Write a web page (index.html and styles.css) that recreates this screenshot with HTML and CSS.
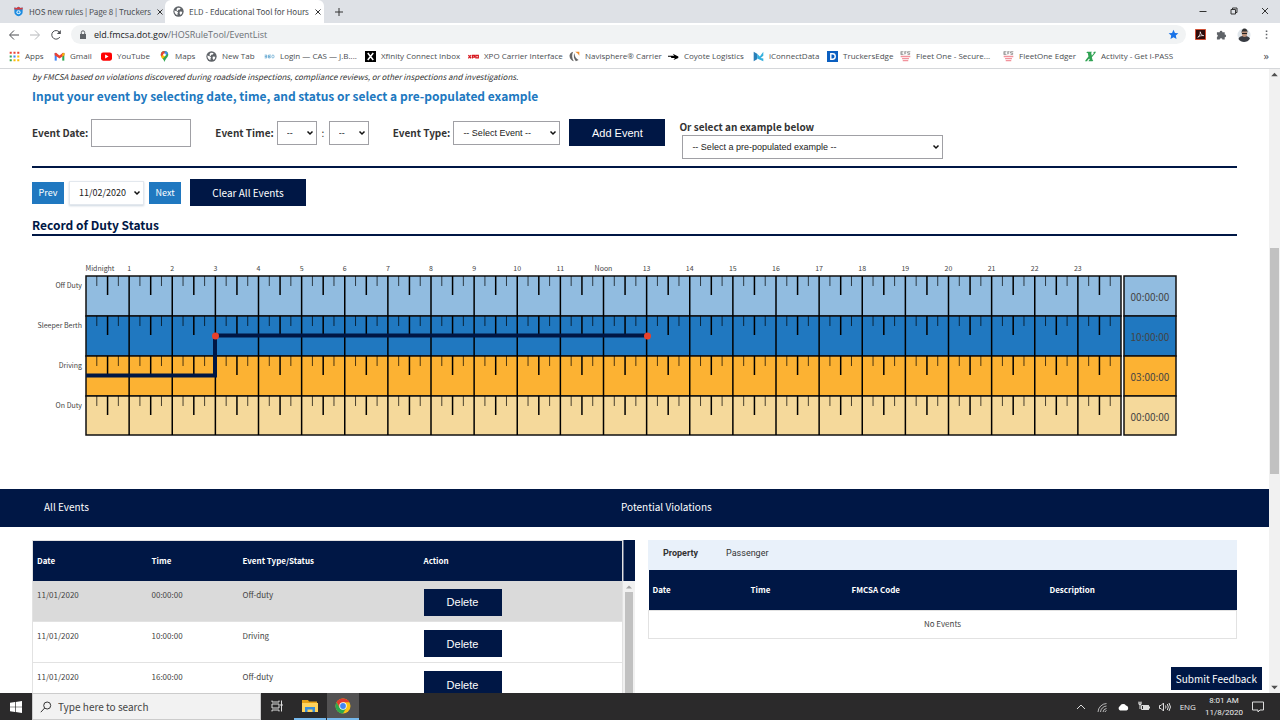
FILE: index.html
```html
<!DOCTYPE html>
<html lang="en">
  <head>
    <meta charset="UTF-8" />
    <meta name="viewport" content="width=device-width, initial-scale=1.0" />
    <title>ELD - Educational Tool for Hours of Service</title>
    <link rel="stylesheet" href="styles.css">
  </head>
  <body>
    <!-- shared icons -->
    <svg class="defs" width="0" height="0">
      <symbol id="globe" viewBox="0 0 16 16">
        <circle cx="8" cy="8" r="7.5" fill="#5f6368"/>
        <path d="M2 6.5l3.5 1 2 2-1 1.500v2.500C3.500 12.500 2 10 2 6.500zM7 2.500l4 .5-1 2-2.500.5-.5 2L5 6l.5-2zM10 8l3.500.5-.5 2.500-2 2-1.500-2.500z" fill="#fff"/>
      </symbol>
      <symbol id="efs" viewBox="0 0 16 16">
        <path d="M1 1h4M1 3h3M1 5h4M1.500 1v4M6.500 1h3M7 1v4M7 3h2M11 1h4M11 1v2h3v2h-3" stroke="#777" stroke-width="1" fill="none"/>
        <path d="M1 7h14v2H1zM3 10h10v2H3zM4 13h8v2H4z" fill="#f2939d"/>
      </symbol>
    </svg>

    <div class="browser">
      <header>
        <div class="tabs">
          <div class="tab">
            <svg class="ico" viewBox="0 0 16 16"><path d="M2 2l3 1 3-2 3 2 3-1v7c0 3-3 5-6 6-3-1-6-3-6-6z" fill="#1c8be0"/><path d="M2 2l3 1 3-2 3 2 3-1v3H2z" fill="#d93a3a"/><circle cx="8" cy="9" r="3" fill="#d5efff"/><circle cx="8" cy="9" r="1.500" fill="#1c8be0"/></svg>
            <span class="tab-title">HOS new rules | Page 8 | Truckers</span>
            <button class="tab-close" aria-label="Close tab"><svg viewBox="0 0 8 8"><path d="M1.500 1.500l5 5M6.500 1.500l-5 5"/></svg></button>
          </div>
          <div class="tab active">
            <svg class="ico"><use href="#globe"/></svg>
            <span class="tab-title">ELD - Educational Tool for Hours</span>
            <button class="tab-close" aria-label="Close tab"><svg viewBox="0 0 8 8"><path d="M1.500 1.500l5 5M6.500 1.500l-5 5"/></svg></button>
          </div>
          <button class="new-tab" aria-label="New tab"><svg viewBox="0 0 10 10"><path d="M5 1v8M1 5h8"/></svg></button>
          <div class="win-btns">
            <button aria-label="Minimize"><svg viewBox="0 0 8 8"><path d="M.5 4.500h7"/></svg></button>
            <button aria-label="Restore"><svg viewBox="0 0 8 8"><path d="M1 2.500h4.500V7H1zM2.500 2.500V1H7v4.500H5.500"/></svg></button>
            <button aria-label="Close"><svg viewBox="0 0 8 8"><path d="M1 1l6 6M7 1L1 7"/></svg></button>
          </div>
        </div>

        <div class="toolbar">
          <button aria-label="Back"><svg viewBox="0 0 12 12"><path d="M11 6H2M6 1.500L1.500 6 6 10.500"/></svg></button>
          <button class="dim" aria-label="Forward"><svg viewBox="0 0 12 12"><path d="M1 6h9M6 1.500L10.500 6 6 10.500"/></svg></button>
          <button aria-label="Reload"><svg viewBox="0 0 12 12"><path d="M9.800 8a4.300 4.300 0 1 1-.5-5"/><path d="M10.800 1v4H6.800z" class="solid"/></svg></button>
          <div class="address">
            <svg class="lock" viewBox="0 0 8 10"><path d="M1 4h6v5H1z" fill="#5f6368"/><path d="M2.300 4V2.500a1.700 1.700 0 0 1 3.400 0V4" fill="none" stroke="#5f6368"/></svg>
            <span class="url">eld.fmcsa.dot.gov<span>/HOSRuleTool/EventList</span></span>
            <svg class="star" viewBox="0 0 12 12"><path d="M6 .8l1.600 3.500 3.700.4-2.800 2.500.8 3.800L6 9.100 2.700 11l.8-3.800L.7 4.700l3.700-.4z" fill="#1a73e8"/></svg>
          </div>
          <div class="extensions">
            <svg viewBox="0 0 12 12"><path d="M.5.5h11v11H.5z" fill="#2d0b0b" stroke="#d9482b"/><path d="M3 9c2-1 3-4 2.700-6 .8 3 2 4 3.800 4.200C7 7 5 7.500 3 9z" fill="none" stroke="#fff" stroke-width=".8"/></svg>
            <svg viewBox="0 0 12 12"><path d="M1 3.500h3a1.500 1.500 0 1 1 3 0h2.500V6a1.500 1.500 0 1 1 0 3v2.500H7a1.500 1.500 0 0 0-3 0H1V8.800a1.500 1.500 0 0 0 0-2.800z" fill="#5f6368"/></svg>
            <svg class="avatar" viewBox="0 0 14 14"><circle cx="7" cy="7" r="6.500" fill="#dfe5ea"/><path d="M1.500 11c1-3 3-3 5.500-3s5 .5 6 2.500C12 13 9 14 7 14s-4.500-1-5.500-3z" fill="#383b42"/><ellipse cx="7.500" cy="5.500" rx="2.700" ry="3.500" fill="#b98f78"/><path d="M4.500 5C4.500 2 5.500.5 7.500.5S10.800 2 10.700 5l-.7-1.500H5.500z" fill="#333"/><path d="M5 5.500h5" stroke="#222"/></svg>
            <svg viewBox="0 0 12 12"><path d="M5.200 1.500h1.700v1.700H5.200zM5.200 5.200h1.700v1.700H5.200zM5.200 8.900h1.700v1.700H5.200z" fill="#5f6368"/></svg>
          </div>
        </div>

        <nav class="bookmarks">
          <a href="#"><svg class="ico" viewBox="0 0 16 16"><path d="M1 1h3v3H1zM6.500 1h3v3h-3zM12 1h3v3h-3z" fill="#ea4335"/><path d="M1 6.500h3v3H1zM1 12h3v3H1z" fill="#34a853"/><path d="M6.500 6.500h3v3h-3z" fill="#4285f4"/><path d="M12 6.500h3v3h-3zM6.500 12h3v3h-3zM12 12h3v3h-3z" fill="#fbbc04"/></svg>Apps</a>
          <a href="#"><svg class="ico" viewBox="0 0 16 16"><path d="M1 3h3v11H1z" fill="#4285f4"/><path d="M12 3h3v11h-3z" fill="#34a853"/><path d="M1 3l2-.5 5 4 5-4 2 .5v3l-7 5-7-5z" fill="#ea4335"/><path d="M12 4l3-1.500V6l-3 2z" fill="#fbbc04"/></svg>Gmail</a>
          <a href="#"><svg class="ico" viewBox="0 0 16 16"><rect x="0" y="2" width="16" height="12" rx="3" fill="#f00"/><path d="M6 5l5 3-5 3z" fill="#fff"/></svg>YouTube</a>
          <a href="#"><svg class="ico" viewBox="0 0 16 16"><path d="M8 0a5.500 5.500 0 0 1 5.500 5.500C13.500 9 10 10 8 16 6 10 2.500 9 2.500 5.500A5.500 5.500 0 0 1 8 0z" fill="#34a853"/><path d="M8 0a5.500 5.500 0 0 1 5 3.500L8 8z" fill="#4285f4"/><path d="M8 0v5L3.500 8.500A5.500 5.500 0 0 1 8 0z" fill="#ea4335"/><path d="M3 8l5-4.500 1 4-4 4z" fill="#fbbc04"/><circle cx="8" cy="5.500" r="2" fill="#fff"/></svg>Maps</a>
          <a href="#"><svg class="ico"><use href="#globe"/></svg>New Tab</a>
          <a href="#"><svg class="ico" viewBox="0 0 16 16"><path d="M1 6h3v4H1M1 8h3M10 6H6.500v4H9V8H7" fill="none" stroke="#5ba3cf" stroke-width="1.200"/><ellipse cx="13" cy="8" rx="1.700" ry="2.200" fill="none" stroke="#5ba3cf"/></svg>Login — CAS — J.B....</a>
          <a href="#"><svg class="ico" viewBox="0 0 16 16"><path d="M0 0h16v16H0z"/><path d="M4 3l8 10M12 3L4 13" stroke="#fff" stroke-width="2.200"/></svg>Xfinity Connect Inbox</a>
          <a href="#"><svg class="ico" viewBox="0 0 16 16"><path d="M.5 6l4 4.500M4.500 6l-4 4.500M6.500 11V6.500h3V9h-3M11.500 6.500h3.500V10h-3.500z" fill="none" stroke="#d71920" stroke-width="1.800"/></svg>XPO Carrier Interface</a>
          <a href="#"><svg class="ico" viewBox="0 0 16 16"><path d="M6 1C2 2 0 5 1 9c1 3 3 5 6 6C4 11 4 5 6 1zM8 3c-2 4-1 8 2 12l4-2c-4-2-6-5-6-10z" fill="#666"/><path d="M9 1l6 0v6l-2-3z" fill="#f28c28"/></svg>Navisphere® Carrier</a>
          <a href="#"><svg class="ico" viewBox="0 0 16 16"><path d="M0 7h9L7 4l8 4v2l-7 3 2-3H5L4 8.500H0z"/></svg>Coyote Logistics</a>
          <a href="#"><svg class="ico" viewBox="0 0 16 16"><path d="M1 1l5 3v8l-5 3z" fill="#2a7fb8"/><path d="M6 4l4 4 5-7v6l-4 3 4 1v4L6 11z" fill="#35b0de"/></svg>iConnectData</a>
          <a href="#"><svg class="ico" viewBox="0 0 16 16"><path d="M0 0h16v16H0z" fill="#0b5fc0"/><path d="M5.500 4H8a4 4 0 0 1 0 8H5.500z" fill="none" stroke="#fff" stroke-width="2"/></svg>TruckersEdge</a>
          <a href="#"><svg class="ico"><use href="#efs"/></svg>Fleet One - Secure...</a>
          <a href="#"><svg class="ico"><use href="#efs"/></svg>FleetOne Edger</a>
          <a href="#"><svg class="ico" viewBox="0 0 16 16"><path d="M3 1h7l-1 2 1 4 3-4h-1l1-2h3l-1 2-5 6 1 4h1l-1 2H5l1-2h1l-1-2-2 2-1 2H0l1-2 4-5-1-5H2z" fill="#31a354"/></svg>Activity - Get I-PASS</a>
          <button class="more" aria-label="More bookmarks">»</button>
        </nav>
      </header>

      <div class="viewport">
        <main>
          <div class="content">
            <p class="disclaimer">by FMCSA based on violations discovered during roadside inspections, compliance reviews, or other inspections and investigations.</p>
            <h2>Input your event by selecting date, time, and status or select a pre-populated example</h2>

            <form class="event-form">
              <div class="field date">
                <label for="event-date">Event Date:</label>
                <input type="text" id="event-date" />
              </div>
              <div class="field time">
                <label for="event-hour">Event Time:</label>
                <select id="event-hour"><option>--</option></select>
                <span>:</span>
                <select id="event-minute" aria-label="Minutes"><option>--</option></select>
              </div>
              <div class="field type">
                <label for="event-type">Event Type:</label>
                <select id="event-type"><option>-- Select Event --</option></select>
              </div>
              <button type="button" class="btn add">Add Event</button>
              <div class="example">
                <label for="example">Or select an example below</label>
                <select id="example"><option>-- Select a pre-populated example --</option></select>
              </div>
            </form>

            <div class="day-nav">
              <button class="step">Prev</button>
              <select aria-label="Day"><option>11/02/2020</option></select>
              <button class="step">Next</button>
              <button class="btn clear">Clear All Events</button>
            </div>

            <h3>Record of Duty Status</h3>
            <svg class="duty-chart" viewBox="0 0 1205 190" role="img" aria-label="Record of Duty Status">
              <g class="bands">
                <rect x="54" y="22" width="1035" height="40" class="off"/>
                <rect x="54" y="62" width="1035" height="40" class="sleeper"/>
                <rect x="54" y="102" width="1035" height="40" class="driving"/>
                <rect x="54" y="142" width="1035" height="39" class="on"/>
                <rect x="1092" y="22" width="52" height="40" class="off"/>
                <rect x="1092" y="62" width="52" height="40" class="sleeper"/>
                <rect x="1092" y="102" width="52" height="40" class="driving"/>
                <rect x="1092" y="142" width="52" height="39" class="on"/>
              </g>
              <g id="hours"></g>
              <g class="row-names">
                <text x="50" y="34">Off Duty</text>
                <text x="50" y="74">Sleeper Berth</text>
                <text x="50" y="114">Driving</text>
                <text x="50" y="154">On Duty</text>
              </g>
              <g class="totals">
                <text x="1118" y="47">00:00:00</text>
                <text x="1118" y="87">10:00:00</text>
                <text x="1118" y="127">03:00:00</text>
                <text x="1118" y="167">00:00:00</text>
              </g>
              <path class="status-line" d="M54 121.500H183V81.500H615"/>
              <circle cx="183.500" cy="82" r="3.500" fill="#e8412b"/>
              <circle cx="615.500" cy="82" r="3.500" fill="#e8412b"/>
            </svg>
          </div>

          <div class="section-bar">
            <span>All Events</span>
            <span>Potential Violations</span>
          </div>

          <div class="lists">
            <div class="events">
              <table>
                <thead>
                  <tr><th class="c1">Date</th><th class="c2">Time</th><th class="c3">Event Type/Status</th><th>Action</th></tr>
                </thead>
                <tbody>
                  <tr class="selected"><td>11/01/2020</td><td>00:00:00</td><td>Off-duty</td><td><button class="btn delete">Delete</button></td></tr>
                  <tr><td>11/01/2020</td><td>10:00:00</td><td>Driving</td><td><button class="btn delete">Delete</button></td></tr>
                  <tr><td>11/01/2020</td><td>16:00:00</td><td>Off-duty</td><td><button class="btn delete">Delete</button></td></tr>
                </tbody>
              </table>
              <div class="list-scroll">
                <div class="corner"></div>
                <svg viewBox="0 0 10 10"><path d="M2 7l3-3 3 3z" fill="#a3a3a3"/></svg>
                <div class="thumb"></div>
              </div>
            </div>
            <div class="violations">
              <div class="carrier-tabs">
                <button class="on">Property</button>
                <button>Passenger</button>
              </div>
              <table>
                <thead>
                  <tr><th class="c1">Date</th><th class="c2">Time</th><th class="c3">FMCSA Code</th><th>Description</th></tr>
                </thead>
                <tbody>
                  <tr><td colspan="4">No Events</td></tr>
                </tbody>
              </table>
            </div>
          </div>
        </main>

        <div class="scrollbar">
          <svg viewBox="0 0 10 10"><path d="M2 6.500l3-3 3 3z"/></svg>
          <div class="track"><div class="thumb"></div></div>
          <svg viewBox="0 0 10 10"><path d="M2 3.500l3 3 3-3z"/></svg>
        </div>
        <button class="feedback">Submit Feedback</button>
      </div>

      <footer class="taskbar">
        <button class="start" aria-label="Start"><svg viewBox="0 0 12 12"><path d="M0 1.700l5-.7v4.700H0zM5.700.9L12 0v5.700H5.700zM0 6.300h5V11l-5-.7zM5.700 6.300H12V12l-6.300-.9z" fill="#fff"/></svg></button>
        <label class="search">
          <svg viewBox="0 0 12 12"><circle cx="7.200" cy="4.500" r="3.500"/><path d="M4.700 7L.8 11.200"/></svg>
          <input type="text" placeholder="Type here to search" />
        </label>
        <button class="app" aria-label="Task View"><svg viewBox="0 0 12 12" fill="none" stroke="#ddd"><path d="M1 .5V2h7V.5M1 4h7v4H1zM1 11.500V10h7v1.500M10.500.5v11"/><path d="M9.500 4h2v2h-2z" fill="#ddd" stroke="none"/></svg></button>
        <button class="app open" aria-label="File Explorer"><svg class="big" viewBox="0 0 16 16"><path d="M0 2h6l1 1.500h8V14H0z" fill="#e8a317"/><path d="M0 5h16v9H0z" fill="#ffd35c"/><path d="M3 14V9h10v5h-2.500v-2.500h-5V14z" fill="#3a8fd9"/></svg></button>
        <button class="app open current" aria-label="Chrome"><svg class="big" viewBox="0 0 16 16"><circle cx="8" cy="8" r="7.500" fill="#fbc116"/><path d="M1.500 4.250A7.500 7.500 0 0 1 14.500 4.250H8L4.800 9.900z" fill="#e33b2e"/><path d="M1.500 4.250A7.500 7.500 0 0 0 8 15.500L11.200 9.900H4.800z" fill="#2da94f"/><circle cx="8" cy="8" r="3.700" fill="#fff"/><circle cx="8" cy="8" r="2.900" fill="#4285f4"/></svg></button>
        <div class="tray">
          <svg viewBox="0 0 12 12"><path d="M2 8l4-4 4 4"/></svg>
          <svg viewBox="0 0 12 12"><path d="M2 11a9 9 0 0 1 8.500-8.500M4.500 11A6.500 6.500 0 0 1 10.500 5M7 11a4 4 0 0 1 3.500-3.500M9 11a2 2 0 0 1 1.500-1.500" stroke-width=".8"/></svg>
          <svg viewBox="0 0 12 12"><path d="M3 9.500a2.500 2.500 0 0 1 0-4.500 3.500 3.500 0 0 1 6-.5A2.600 2.600 0 0 1 9.500 9.500z" fill="#fff" stroke="none"/></svg>
          <svg viewBox="0 0 12 12"><path d="M3.500 4.500h7v4h-7zM11.500 5.500v2M.5 2h3M1 .5V2M3 .5V2M1 2v1.500h2V2M2 3.500V8"/><path d="M5.500 4.500h5v4h-5z" fill="#ddd"/></svg>
          <svg viewBox="0 0 12 12"><path d="M.5 4.500H2L4.500 2v8L2 7.500H.5zM6.500 4.500q1 1.500 0 3M8.300 3q2 3 0 6M10 2q3 4 0 8"/></svg>
          <span>ENG</span>
          <span class="clock">8:01 AM<br>11/8/2020</span>
          <svg class="notes" viewBox="0 0 12 12"><path d="M.5 1h11v8H8L6 11 6 9H.5z"/></svg>
        </div>
      </footer>
    </div>

    <script src="chart.js"></script>
  </body>
</html>
```
FILE: styles.css
```css
* {
  margin: 0;
  padding: 0;
  box-sizing: border-box;
}

body {
  font-family: "Noto Sans CJK SC", sans-serif;
  color: #333;
  background-color: #fff;
}

button {
  border: none;
  background: none;
  font-family: inherit;
  cursor: pointer;
}

.defs {
  position: absolute;
}

.browser {
  display: flex;
  flex-direction: column;
  height: 100vh;
  overflow: hidden;
}

/* browser chrome */
header {
  font-family: "Open Sans", sans-serif;
  font-size: 8px;
  color: #4a4d51;
  border-bottom: 1px solid #d5d7da;
}

.ico {
  width: 11px;
  height: 11px;
  flex: none;
}

.tabs {
  display: flex;
  height: 23px;
  background-color: #dee1e6;
}

.tab {
  display: flex;
  align-items: center;
  gap: 5px;
  width: 165px;
  padding: 0 6px 0 13px;
}

.tab.active {
  width: 159px;
  padding-left: 8px;
  background-color: #fff;
  border-radius: 6px 6px 0 0;
}

.tab-title {
  flex: 1;
  font-family: "Noto Sans CJK SC", sans-serif;
  line-height: 12px;
  white-space: nowrap;
}

.tab-close,
.tab-close svg {
  width: 8px;
  height: 8px;
  display: block;
}

.tab-close svg,
.new-tab svg,
.win-btns svg {
  fill: none;
  stroke: #333;
}

.new-tab {
  width: 30px;
}

.new-tab svg {
  width: 10px;
  height: 10px;
}

.win-btns {
  display: flex;
  margin-left: auto;
  height: 19px;
}

.win-btns button {
  width: 31px;
}

.win-btns svg {
  width: 8px;
  height: 8px;
}

.toolbar {
  display: flex;
  align-items: center;
  height: 23px;
  padding: 0 8px;
}

.toolbar button {
  width: 21px;
}

.toolbar button svg {
  display: block;
  width: 12px;
  height: 12px;
  fill: none;
  stroke: #4a4d51;
}

.toolbar .dim svg {
  stroke: #b5b7ba;
}

.toolbar .solid {
  fill: #4a4d51;
  stroke: none;
}

.address {
  display: flex;
  align-items: center;
  flex: 1;
  height: 19px;
  padding: 0 7px 0 8px;
  border-radius: 10px;
  background-color: #f1f3f4;
}

.lock {
  width: 8px;
  height: 10px;
  margin-right: 7px;
}

.url {
  flex: 1;
  font-size: 9px;
  color: #202124;
}

.url span {
  color: #6b6f74;
}

.star {
  width: 11px;
  height: 11px;
}

.extensions {
  display: flex;
  align-items: center;
  gap: 10px;
  margin-left: 9px;
}

.extensions svg {
  width: 11px;
  height: 11px;
}

.extensions .avatar {
  width: 14px;
  height: 14px;
}

.bookmarks {
  display: grid;
  grid-template-columns: 45px 47px 58px 47px 58px 101px 103px 101px 99px 85px 74px 73px 103px 82px 1fr auto;
  align-items: center;
  height: 22px;
  padding: 0 11px 2px 9px;
}

.bookmarks a {
  display: flex;
  align-items: center;
  gap: 5px;
  color: #4a4d51;
  text-decoration: none;
  line-height: 12px;
  white-space: nowrap;
}

.bookmarks .more {
  font-size: 11px;
  line-height: 12px;
  color: #4a4d51;
}

/* page */
.viewport {
  position: relative;
  display: flex;
  flex: 1;
  min-height: 0;
}

main {
  flex: 1;
  min-width: 0;
  overflow: hidden;
}

.content {
  padding: 0 32px;
}

.disclaimer {
  font-size: 8px;
  line-height: 16px;
  font-style: italic;
}

h2 {
  font-size: 12px;
  line-height: 22px;
  color: #2078c0;
}

.event-form {
  display: flex;
  align-items: flex-start;
  height: 61px;
  padding-top: 12px;
  border-bottom: 2px solid #001745;
}

.event-form label {
  font-size: 10px;
  font-weight: bold;
  line-height: 14px;
}

.field {
  display: flex;
  align-items: center;
  gap: 3px;
  height: 28px;
}

.field input {
  width: 100px;
  height: 28px;
  border: 1px solid #a0a0a5;
}

.field.time,
.field.type {
  margin-left: 24px;
}

.field.time span {
  width: 6px;
  font-size: 10px;
  line-height: 14px;
  text-align: center;
}

select {
  appearance: none;
  height: 24px;
  padding: 0 12px 0 9px;
  border: 1px solid #a0a0a5;
  border-radius: 0;
  font-family: "Liberation Sans", sans-serif;
  font-size: 9px;
  color: #222;
  background: #fff url("data:image/svg+xml,%3Csvg xmlns='http://www.w3.org/2000/svg' viewBox='0 0 8 6'%3E%3Cpath d='M1.500 1.500L4 4l2.500-2.500' fill='none' stroke='%23111' stroke-width='1.500'/%3E%3C/svg%3E") no-repeat right 2px center / 8px 6px;
}

.field.time select {
  width: 40px;
}

.field.type select {
  width: 107px;
}

.btn {
  height: 27px;
  color: #fff;
  background-color: #001745;
  font-family: "Liberation Sans", sans-serif;
  font-size: 11px;
}

.btn.add {
  width: 96px;
  margin-left: 9px;
}

.example {
  display: flex;
  flex-direction: column;
  margin-left: 14px;
}

.example label {
  line-height: 16px;
}

.example select {
  width: 261px;
  margin-left: 3px;
}

.day-nav {
  display: flex;
  align-items: center;
  gap: 5px;
  padding-top: 11px;
}

.step {
  height: 22px;
  width: 32px;
  font-size: 9px;
  color: #fff;
  background-color: #2078c0;
}

.day-nav select {
  width: 75px;
  border-color: #e3e8ee;
  font-family: "Noto Sans CJK SC", sans-serif;
  box-shadow: 0 1px 2px #ccd6e0;
}

.btn.clear {
  width: 116px;
  margin-left: 4px;
  font-family: inherit;
  font-size: 10px;
}

h3 {
  margin-top: 10px;
  font-size: 12px;
  line-height: 18px;
  color: #001745;
  border-bottom: 2px solid #001745;
}

.duty-chart {
  display: block;
  width: 100%;
  margin: 18px 0 45px;
  font-size: 7px;
}

.duty-chart text {
  fill: #444;
}

.off { fill: #91bce0; }
.sleeper { fill: #2078c0; }
.driving { fill: #fcb233; }
.on { fill: #f5d99b; }

.bands rect {
  stroke: #111;
  stroke-width: 1.5;
}

.grid-line,
.half {
  stroke: #000;
  stroke-width: 1.5;
}

.quarter {
  stroke: #000;
  stroke-opacity: 0.7;
}

.hour-name {
  text-anchor: middle;
}

.row-names {
  text-anchor: end;
}

.totals {
  text-anchor: middle;
  font-size: 10px;
}

.status-line {
  fill: none;
  stroke: #001745;
  stroke-width: 4;
}

.section-bar {
  display: grid;
  grid-template-columns: 577px 1fr;
  padding: 0 44px 2px;
  line-height: 36px;
  font-size: 10px;
  color: #fff;
  background-color: #001745;
}

.lists {
  display: grid;
  grid-template-columns: 603px 1fr;
  gap: 13px;
  padding: 13px 32px 0;
}

table {
  width: 100%;
  table-layout: fixed;
  border-collapse: collapse;
  font-size: 8px;
  line-height: 12px;
}

th {
  height: 40px;
  padding: 0 4px;
  text-align: left;
  color: #fff;
  background-color: #001745;
}

td {
  color: #444;
}

.events {
  display: flex;
}

.events table {
  flex: 1;
  border: 1px solid #e2e2e2;
}

.events .c1 { width: 115px; }
.events .c2 { width: 91px; }
.events .c3 { width: 181px; }

.events td {
  height: 41px;
  padding: 8px 4px 5px;
  vertical-align: top;
  border-bottom: 1px solid #e2e2e2;
}

.selected {
  background-color: #dadada;
}

.btn.delete {
  display: block;
  width: 78px;
}

.list-scroll {
  display: flex;
  flex-direction: column;
  align-items: center;
  width: 12px;
  background-color: #f1f1f1;
}

.list-scroll .corner {
  width: 12px;
  height: 41px;
  background-color: #001745;
  border-left: 1px solid #6b7590;
}

.list-scroll svg {
  width: 10px;
  height: 11px;
}

.list-scroll .thumb {
  flex: 1;
  width: 8px;
  background-color: #c1c1c1;
}

.carrier-tabs {
  display: flex;
  gap: 28px;
  height: 30px;
  padding: 0 15px 4px;
  background-color: #e9f1fa;
}

.carrier-tabs button {
  font-family: Roboto, sans-serif;
  font-size: 9px;
  color: #333;
}

.carrier-tabs .on {
  font-weight: bold;
}

.violations .c1 { width: 98px; }
.violations .c2 { width: 101px; }
.violations .c3 { width: 198px; }

.violations td {
  height: 28px;
  text-align: center;
  border: 1px solid #e2e2e2;
}

.scrollbar {
  display: flex;
  flex-direction: column;
  width: 11px;
  background-color: #f1f1f1;
}

.scrollbar svg {
  width: 11px;
  height: 11px;
  fill: #505050;
}

.track {
  flex: 1;
  padding: 168px 1px 0;
}

.track .thumb {
  height: 226px;
  background-color: #c1c1c1;
}

.feedback {
  position: absolute;
  right: 18px;
  bottom: 3px;
  height: 23px;
  padding: 0 5px;
  color: #fff;
  background-color: #001745;
  font-size: 10px;
}

/* taskbar */
.taskbar {
  display: flex;
  height: 27px;
  background-color: #2b2a2b;
  color: #eee;
  font-family: "Open Sans", sans-serif;
}

.start {
  width: 32px;
}

.start svg,
.app svg {
  width: 12px;
  height: 12px;
  display: block;
  margin: 0 auto;
}

.app svg.big {
  width: 16px;
  height: 16px;
}

.search {
  display: flex;
  align-items: center;
  gap: 6px;
  width: 229px;
  padding-left: 7px;
  background-color: #f2f2f2;
  border: 1px solid #ccc;
}

.search svg {
  width: 12px;
  height: 12px;
  fill: none;
  stroke: #333;
}

.search input {
  flex: 1;
  min-width: 0;
  border: none;
  background: none;
  font-family: "Noto Sans CJK SC", sans-serif;
  font-size: 10px;
}

.search input::placeholder {
  color: #444;
}

.app {
  width: 32px;
  margin-right: 1px;
  border-bottom: 2px solid transparent;
}

.app.open {
  border-bottom-color: #76b9ed;
}

.app.current {
  background-color: #535253;
}

.tray {
  display: flex;
  align-items: center;
  gap: 9px;
  margin-left: auto;
  padding-right: 16px;
  font-size: 8px;
}

.tray svg {
  width: 12px;
  height: 12px;
  fill: none;
  stroke: #ddd;
}

.clock {
  font-family: Roboto, sans-serif;
  line-height: 12px;
  text-align: center;
}
```
FILE: chart.js
```js
const SVG = "http://www.w3.org/2000/svg";
const left = 54;
const top0 = 22;
const rowHeight = 40;
const hourWidth = 1035 / 24;
const hours = document.getElementById("hours");

function line(x, y, length, cls) {
  const el = document.createElementNS(SVG, "path");
  el.setAttribute("d", `M${x} ${y}v${length}`);
  el.setAttribute("class", cls);
  hours.appendChild(el);
}

for (let h = 0; h < 24; h++) {
  const x = left + h * hourWidth;

  const name = document.createElementNS(SVG, "text");
  name.textContent = h === 0 ? "Midnight" : h === 12 ? "Noon" : h;
  name.setAttribute("x", h === 0 ? x + 14 : x);
  name.setAttribute("y", 17);
  name.setAttribute("class", "hour-name");
  hours.appendChild(name);

  if (h > 0) line(x, top0, 159, "grid-line");

  // quarter, half and three-quarter ticks in each duty row
  for (let row = 0; row < 4; row++) {
    const y = top0 + row * rowHeight;
    line(x + hourWidth / 4, y, 10, "quarter");
    line(x + hourWidth / 2, y, 19, "half");
    line(x + hourWidth * 3 / 4, y, 10, "quarter");
  }
}
```
